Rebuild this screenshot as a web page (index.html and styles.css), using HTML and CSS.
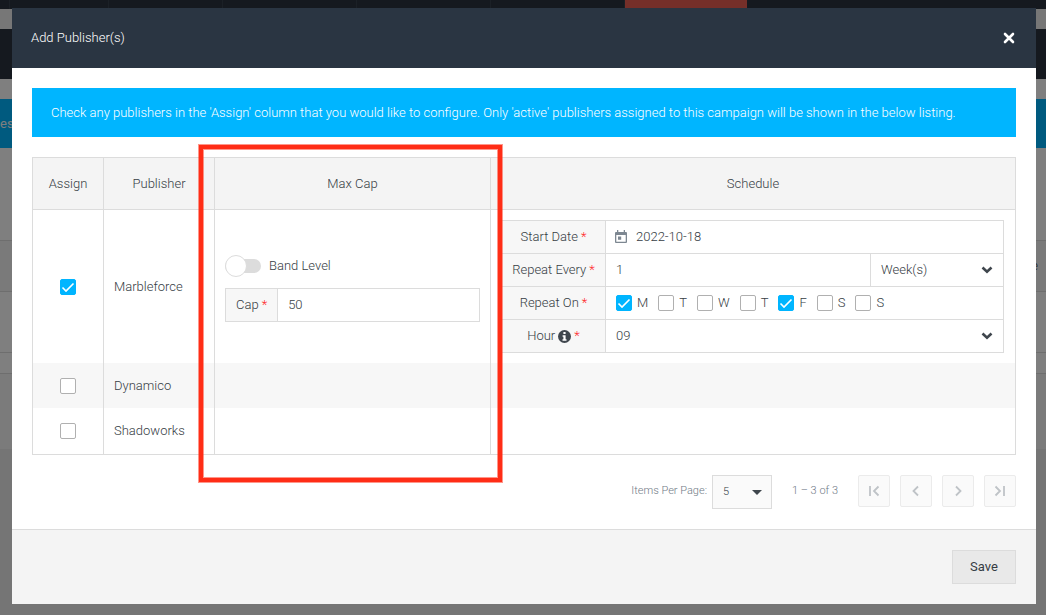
FILE: index.html
```html
<!DOCTYPE html>
<html lang="en">

<head>
    <meta charset="UTF-8">
    <meta name="viewport" content="width=device-width, initial-scale=1.0">
    <title>Add Publisher(s)</title>
    <link rel="stylesheet" href="styles.css">
</head>

<body>
    <!-- Campaign page behind the dialog -->
    <div class="page">
        <div class="page-nav">
            <span class="nav-item nav-xs"></span>
            <span class="nav-item nav-sm"></span>
            <span class="nav-item nav-md"></span>
            <span class="nav-item nav-lg"></span>
            <span class="nav-item nav-lg"></span>
            <span class="nav-item nav-lg"></span>
            <span class="nav-active"></span>
        </div>
        <div class="page-title"></div>
        <div class="page-tabs">es</div>
        <div class="page-panel"></div>
        <div class="page-row page-row-head">e</div>
        <div class="page-row page-row-data"></div>
        <div class="page-row page-row-gap"></div>
        <div class="page-rest"></div>
    </div>

    <div class="backdrop">
        <div class="modal" role="dialog" aria-labelledby="modalTitle">
            <div class="modal-header">
                <h1 id="modalTitle">Add Publisher(s)</h1>
                <button type="button" class="close" aria-label="Close">
                    <svg width="12" height="12" viewBox="0 0 12 12"><path d="M2 2l8 8M10 2l-8 8" fill="none" stroke="#fff" stroke-width="2.6" stroke-linecap="round"/></svg>
                </button>
            </div>

            <div class="modal-body">
                <div class="alert">Check any publishers in the 'Assign' column that you would like to configure. Only 'active' publishers assigned to this campaign will be shown in the below listing.</div>

                <div class="table-wrap">
                    <table class="publishers">
                        <thead>
                            <tr>
                                <th class="col-assign">Assign</th>
                                <th class="col-publisher">Publisher</th>
                                <th class="col-cap">Max Cap</th>
                                <th>Schedule</th>
                            </tr>
                        </thead>
                        <tbody>
                            <tr class="row-open">
                                <td class="assign"><input type="checkbox" class="check" aria-label="Assign Marbleforce" checked></td>
                                <td>Marbleforce</td>
                                <td>
                                    <label class="toggle"><input type="checkbox" class="switch">Band Level</label>
                                    <div class="field">
                                        <label class="field-label" for="cap">Cap <span class="req">*</span></label>
                                        <input type="text" class="control" id="cap" value="50">
                                    </div>
                                </td>
                                <td class="schedule">
                                    <div class="field">
                                        <label class="field-label" for="startDate">Start Date <span class="req">*</span></label>
                                        <div class="date">
                                            <svg width="12" height="14" viewBox="0 0 12 14"><path d="M0 3a1 1 0 0 1 1-1h10a1 1 0 0 1 1 1v9a1 1 0 0 1-1 1H1a1 1 0 0 1-1-1zM1.300 5v6.700h9.400V5z" fill="#7d8791" fill-rule="evenodd"/><path d="M2 0h1.300v2H2zM8.700 0H10v2H8.700zM3 6.500h3.200v3.200H3z" fill="#7d8791"/></svg>
                                            <input type="text" class="control" id="startDate" value="2022-10-18">
                                        </div>
                                    </div>
                                    <div class="field">
                                        <label class="field-label" for="repeatEvery">Repeat Every <span class="req">*</span></label>
                                        <input type="text" class="control" id="repeatEvery" value="1">
                                        <select class="control unit" aria-label="Repeat unit">
                                            <option>Week(s)</option>
                                        </select>
                                    </div>
                                    <div class="field">
                                        <span class="field-label" id="repeatOn">Repeat On <span class="req">*</span></span>
                                        <div class="days" role="group" aria-labelledby="repeatOn">
                                            <label><input type="checkbox" class="check" checked>M</label>
                                            <label><input type="checkbox" class="check">T</label>
                                            <label><input type="checkbox" class="check">W</label>
                                            <label><input type="checkbox" class="check">T</label>
                                            <label><input type="checkbox" class="check" checked>F</label>
                                            <label><input type="checkbox" class="check">S</label>
                                            <label><input type="checkbox" class="check">S</label>
                                        </div>
                                    </div>
                                    <div class="field">
                                        <label class="field-label" for="hour">Hour
                                            <svg width="13" height="13" viewBox="0 0 13 13"><circle cx="6.5" cy="6.5" r="6.5" fill="#3f464d"/><path d="M5.400 2h2.200v2H5.400zM4.600 5.200h3v4h.9v1.500h-4V9.200h.9V6.700h-.8z" fill="#fff"/></svg>
                                            <span class="req">*</span></label>
                                        <select class="control" id="hour">
                                            <option>09</option>
                                        </select>
                                    </div>
                                </td>
                            </tr>
                            <tr class="shaded">
                                <td class="assign"><input type="checkbox" class="check" aria-label="Assign Dynamico"></td>
                                <td>Dynamico</td>
                                <td></td>
                                <td></td>
                            </tr>
                            <tr>
                                <td class="assign"><input type="checkbox" class="check" aria-label="Assign Shadoworks"></td>
                                <td>Shadoworks</td>
                                <td></td>
                                <td></td>
                            </tr>
                        </tbody>
                    </table>
                    <div class="highlight"></div>
                </div>

                <div class="paginator">
                    <label for="pageSize">Items Per Page:</label>
                    <select id="pageSize" class="page-size">
                        <option>5</option>
                    </select>
                    <span class="range">1 – 3 of 3</span>
                    <div class="pager">
                        <button type="button" aria-label="First page" disabled>
                            <svg width="12" height="12" viewBox="0 0 12 12"><path d="M2 1v10M10.500 1.500L6 6l4.500 4.500"/></svg>
                        </button>
                        <button type="button" aria-label="Previous page" disabled>
                            <svg width="12" height="12" viewBox="0 0 12 12"><path d="M8 1.500L3.500 6L8 10.500"/></svg>
                        </button>
                        <button type="button" aria-label="Next page" disabled>
                            <svg width="12" height="12" viewBox="0 0 12 12"><path d="M4 1.500L8.500 6L4 10.500"/></svg>
                        </button>
                        <button type="button" aria-label="Last page" disabled>
                            <svg width="12" height="12" viewBox="0 0 12 12"><path d="M10 1v10M1.500 1.500L6 6l-4.500 4.500"/></svg>
                        </button>
                    </div>
                </div>
            </div>

            <div class="modal-footer">
                <button type="button" class="save">Save</button>
            </div>
        </div>
    </div>
</body>

</html>
```
FILE: styles.css
```css
* {
    box-sizing: border-box;
}

body {
    margin: 0;
    font-family: Roboto, sans-serif;
    font-size: 13px;
    font-weight: 300;
    line-height: 18px;
    color: #363d44;
    overflow: hidden;
}

input,
select,
button {
    font: inherit;
    color: inherit;
    margin: 0;
}

/* Page behind the dialog */
.page {
    display: flex;
    flex-direction: column;
    height: 100vh;
    background: #fff;
}

.page-nav {
    display: flex;
    height: 9px;
    background: #2a323f;
}

.nav-item {
    border-right: 1px solid #36414c;
}

.nav-xs {
    width: 10px;
}

.nav-sm {
    width: 99px;
}

.nav-md {
    width: 114px;
}

.nav-lg {
    width: 134px;
}

.nav-active {
    width: 122px;
    background: #ea5e52;
}

.page-title {
    height: 70px;
    border-top: 20px solid #efefef;
    background: #2a323f;
}

.page-tabs {
    height: 49px;
    margin-top: 20px;
    line-height: 49px;
    background: #00b5ff;
    color: #fff;
    font-weight: 400;
}

.page-panel {
    height: 92px;
}

.page-row {
    border-top: 1px solid #dcdcdc;
}

.page-row-head {
    height: 51px;
    padding-right: 8px;
    line-height: 50px;
    text-align: right;
    background: #f4f4f4;
}

.page-row-data {
    height: 61px;
}

.page-row-gap {
    height: 21px;
}

.page-rest {
    flex: 1;
    border-top: 1px solid #dcdcdc;
    background: linear-gradient(#f7f7f7 75px, #ebebeb 75px);
}

/* Dialog */
.backdrop {
    position: fixed;
    inset: 0;
    padding: 8px 10px 10px 12px;
    background: rgba(0, 0, 0, 0.5);
}

.modal {
    background: #fff;
}

.modal-header {
    display: flex;
    align-items: center;
    justify-content: space-between;
    height: 60px;
    padding: 0 21px 1px 19px;
    background: #2a3542;
    color: #fff;
}

.modal-header h1 {
    margin: 0;
    font-size: 13px;
    font-weight: 300;
}

.close {
    display: flex;
    padding: 0;
    border: 0;
    background: none;
    cursor: pointer;
}

.modal-body {
    padding: 20px;
}

.alert {
    padding: 16px 19px 15px;
    background: #00b5ff;
    color: #fff;
}

.table-wrap {
    position: relative;
    margin-top: 20px;
}

.publishers {
    width: 100%;
    table-layout: fixed;
    border-collapse: separate;
    border-spacing: 0;
    border: 1px solid #dcdcdc;
}

.publishers th {
    height: 52px;
    padding: 0;
    border-bottom: 1px solid #dcdcdc;
    background: #f4f4f4;
    font-weight: 300;
}

.publishers th + th,
.publishers td + td {
    border-left: 1px solid #dcdcdc;
}

.publishers td {
    height: 45px;
    padding: 0 10px;
}

.publishers tr:last-child td {
    height: 46px;
}

.publishers .row-open td {
    padding: 10px;
}

.publishers .row-open .schedule {
    padding-right: 11px;
}

.col-assign {
    width: 70px;
}

.col-publisher {
    width: 111px;
}

.col-cap {
    width: 276px;
}

.shaded {
    background: #f7f7f7;
}

/* Marks the Max Cap column */
.highlight {
    position: absolute;
    top: -12px;
    bottom: -27px;
    left: 167px;
    width: 303px;
    border: 4px solid #ff2d16;
    box-shadow: 0 0 0 1px rgba(255, 45, 22, 0.5), inset 0 0 0 1px rgba(255, 45, 22, 0.5);
    pointer-events: none;
}

.check {
    appearance: none;
    display: block;
    width: 16px;
    height: 16px;
    border: 1px solid #b0b0b0;
    border-radius: 2px;
    background: #fff;
}

.assign .check {
    margin: 0 auto;
}

.check:checked {
    border-color: #00b5ff;
    background: #00b5ff url("data:image/svg+xml,%3Csvg xmlns='http://www.w3.org/2000/svg' viewBox='0 0 14 14'%3E%3Cpath d='M1.500 7.500l3.500 3.500L12.500 3.500' fill='none' stroke='white' stroke-width='1.600'/%3E%3C/svg%3E") center / 14px no-repeat;
}

.toggle {
    display: flex;
    align-items: center;
    gap: 8px;
    margin-bottom: 13px;
    padding-top: 6px;
}

.switch {
    appearance: none;
    display: flex;
    align-items: center;
    width: 36px;
    height: 14px;
    border-radius: 7px;
    background: #dcdcdc;
}

.switch::before {
    content: "";
    width: 20px;
    height: 20px;
    border: 1px solid #dcdcdc;
    border-radius: 50%;
    background: #fff;
}

.field {
    display: flex;
    height: 34px;
    border: 1px solid #dcdcdc;
    background: #fff;
}

.field-label {
    display: flex;
    align-items: center;
    justify-content: center;
    gap: 3px;
    padding: 0 10px;
    border-right: 1px solid #dcdcdc;
    background: #f7f7f7;
    white-space: nowrap;
}

.req {
    color: #ff1f1f;
}

.control {
    flex: 1;
    min-width: 0;
    padding: 0 10px;
    border: 0;
    border-radius: 0;
    background: none;
}

select.control {
    appearance: none;
    background: url("data:image/svg+xml,%3Csvg xmlns='http://www.w3.org/2000/svg' viewBox='0 0 12 8'%3E%3Cpath d='M1.500 1.500L6 5.700l4.500-4.200' fill='none' stroke='%233f464d' stroke-width='2.600'/%3E%3C/svg%3E") right 10px center / 12px 8px no-repeat;
}

.schedule .field + .field {
    margin-top: -1px;
}

.schedule .field-label {
    width: 104px;
    padding: 0;
}

.control.unit {
    flex: none;
    width: 133px;
    border-left: 1px solid #dcdcdc;
}

.date {
    display: flex;
    flex: 1;
    align-items: center;
    padding-left: 9px;
}

.date .control {
    padding-left: 9px;
}

.days {
    display: flex;
    align-items: center;
    gap: 10px;
    padding-left: 10px;
}

.days label {
    display: flex;
    align-items: center;
    gap: 5px;
}

.paginator {
    display: flex;
    justify-content: flex-end;
    margin-top: 20px;
    font-size: 11px;
    line-height: 32px;
    color: #6f7a86;
}

.page-size {
    appearance: none;
    width: 60px;
    height: 34px;
    margin: 0 20px 0 5px;
    padding: 0 10px;
    border: 1px solid #dcdcdc;
    border-radius: 0;
    background: #fafafa url("data:image/svg+xml,%3Csvg xmlns='http://www.w3.org/2000/svg' viewBox='0 0 10 5'%3E%3Cpath d='M0 0h10L5 5z' fill='%233f464d'/%3E%3C/svg%3E") right 9px center / 10px 5px no-repeat;
    color: #363d44;
}

.pager {
    display: flex;
    gap: 10px;
    margin-left: 20px;
}

.pager button {
    display: flex;
    align-items: center;
    justify-content: center;
    width: 32px;
    height: 32px;
    padding: 0;
    border: 1px solid #ebebeb;
    border-radius: 2px;
    background: #fafafa;
}

.pager path {
    fill: none;
    stroke: #bfc3c7;
    stroke-width: 1.8;
}

.modal-footer {
    display: flex;
    justify-content: flex-end;
    padding: 20px;
    border-top: 1px solid #dcdcdc;
    background: #f4f4f4;
}

.save {
    width: 64px;
    height: 34px;
    padding: 0;
    border: 1px solid #dcdcdc;
    background: #e9e9e9;
    font-weight: 400;
    cursor: pointer;
}
```
